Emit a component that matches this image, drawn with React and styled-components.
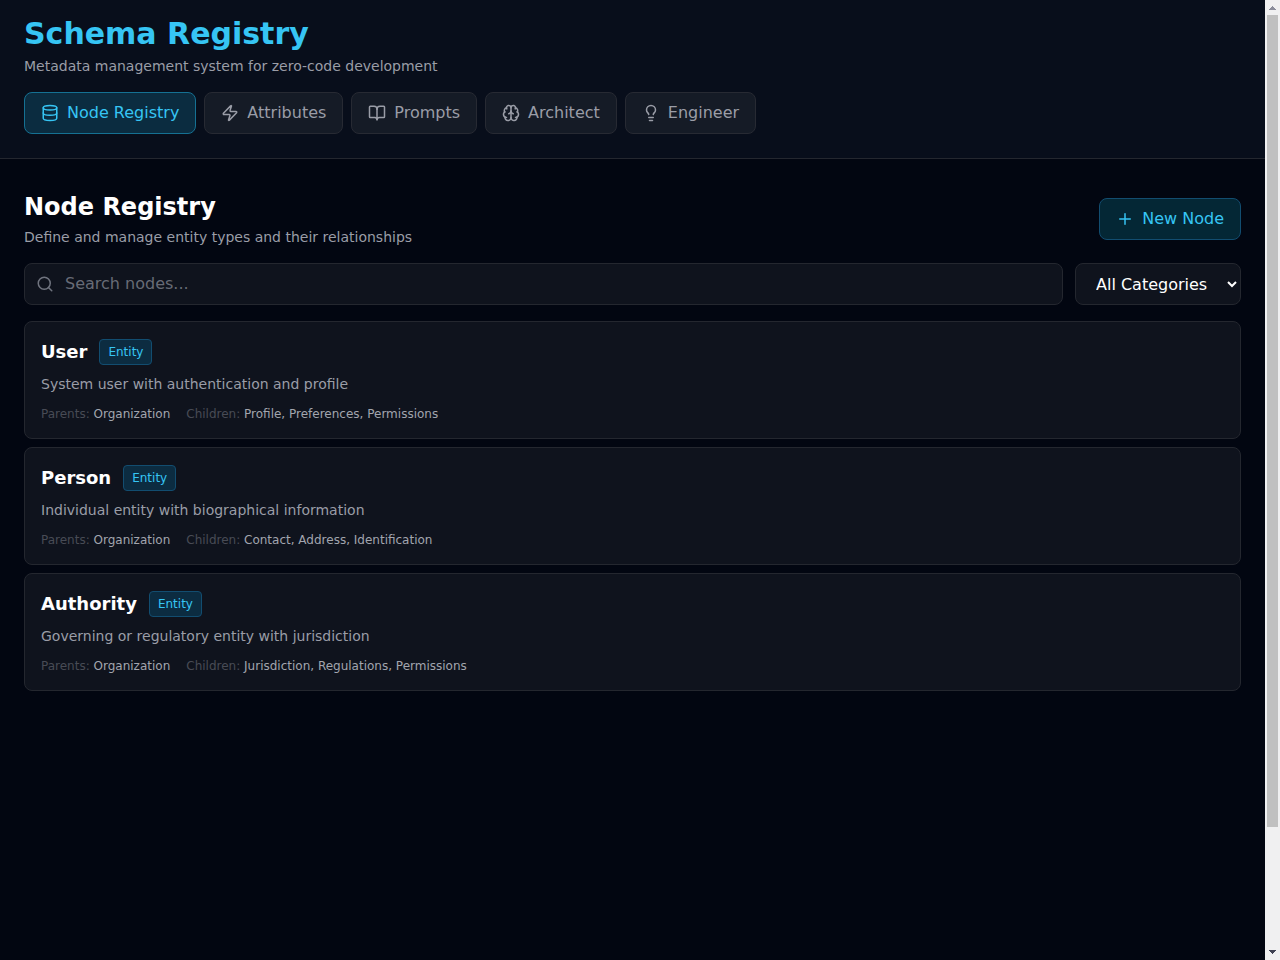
import { useState } from "react";
import styled, { createGlobalStyle } from "styled-components";
import {
  BookOpen,
  Brain,
  Database,
  Lightbulb,
  Plus,
  Search,
  Zap,
} from "lucide-react";

const tabs = [
  { label: "Node Registry", icon: Database },
  { label: "Attributes", icon: Zap },
  { label: "Prompts", icon: BookOpen },
  { label: "Architect", icon: Brain },
  { label: "Engineer", icon: Lightbulb },
];

const nodes = [
  {
    name: "User",
    category: "Entity",
    description: "System user with authentication and profile",
    parents: "Organization",
    children: "Profile, Preferences, Permissions",
  },
  {
    name: "Person",
    category: "Entity",
    description: "Individual entity with biographical information",
    parents: "Organization",
    children: "Contact, Address, Identification",
  },
  {
    name: "Authority",
    category: "Entity",
    description: "Governing or regulatory entity with jurisdiction",
    parents: "Organization",
    children: "Jurisdiction, Regulations, Permissions",
  },
];

export default function App() {
  const [active, setActive] = useState("Node Registry");
  const [query, setQuery] = useState("");

  const visible = nodes.filter((node) =>
    node.name.toLowerCase().includes(query.toLowerCase())
  );

  return (
    <Screen>
      <GlobalStyle />
      <Page>
        <Header>
          <Brand>Schema Registry</Brand>
          <Subtitle>Metadata management system for zero-code development</Subtitle>
          <Tabs>
            {tabs.map(({ label, icon: Icon }) => (
              <Tab
                key={label}
                $active={label === active}
                onClick={() => setActive(label)}
              >
                <Icon size={18} />
                {label}
              </Tab>
            ))}
          </Tabs>
        </Header>
        <Main>
          <TitleRow>
            <div>
              <Title>Node Registry</Title>
              <Subtitle>Define and manage entity types and their relationships</Subtitle>
            </div>
            <NewButton>
              <Plus size={18} />
              New Node
            </NewButton>
          </TitleRow>
          <Filters>
            <SearchBox>
              <Search size={18} />
              <SearchInput
                placeholder="Search nodes..."
                value={query}
                onChange={(e) => setQuery(e.target.value)}
              />
            </SearchBox>
            <CategorySelect>
              <option>All Categories</option>
              <option>Entity</option>
            </CategorySelect>
          </Filters>
          <NodeList>
            {visible.map((node) => (
              <Card key={node.name}>
                <CardHead>
                  <NodeName>{node.name}</NodeName>
                  <Badge>{node.category}</Badge>
                </CardHead>
                <Description>{node.description}</Description>
                <Meta>
                  <span>
                    Parents: <MetaValue>{node.parents}</MetaValue>
                  </span>
                  <span>
                    Children: <MetaValue>{node.children}</MetaValue>
                  </span>
                </Meta>
              </Card>
            ))}
          </NodeList>
        </Main>
      </Page>
      <Scrollbar>
        <Arrow viewBox="0 0 15 14" fill="#8b8d9b">
          <path d="M4 10h7v-1h-1v-1h-1v-1h-1v-1h-1v1h-1v1h-1v1h-1z" />
        </Arrow>
        <Thumb />
        <Arrow viewBox="0 0 15 14" fill="#3f4152">
          <path d="M4 4h7v1h-1v1h-1v1h-1v1h-1v-1h-1v-1h-1v-1h-1z" />
        </Arrow>
      </Scrollbar>
    </Screen>
  );
}

const GlobalStyle = createGlobalStyle`
  * {
    box-sizing: border-box;
    margin: 0;
  }
  body {
    background: #020611;
    font-family: "DejaVu Sans", sans-serif;
    font-size: 16px;
    line-height: 24px;
    overflow: hidden;
  }
  button, input, select {
    font: inherit;
  }
`;

const Screen = styled.div`
  display: flex;
  height: 100vh;
  overflow: hidden;
`;

const Page = styled.div`
  flex: 1;
  min-width: 0;
  background: #020611;
  color: #ffffff;
`;

const Header = styled.header`
  padding: 16px 24px 24px;
  background: #080e1b;
  border-bottom: 1px solid #24272f;
`;

const Brand = styled.h1`
  font-size: 30px;
  line-height: 36px;
  font-weight: 700;
  color: #36c5f4;
`;

const Subtitle = styled.p`
  margin-top: 4px;
  font-size: 14px;
  line-height: 20px;
  color: #9a9da7;
`;

const Tabs = styled.nav`
  display: flex;
  gap: 8px;
  margin-top: 16px;
`;

const Tab = styled.button`
  display: flex;
  align-items: center;
  gap: 8px;
  padding: 8px 16px;
  border-radius: 8px;
  border: 1px solid ${({ $active }) => ($active ? "#157193" : "#272a33")};
  background: ${({ $active }) => ($active ? "#0b2c40" : "#151b26")};
  color: ${({ $active }) => ($active ? "#36c5f4" : "#9a9da7")};
  cursor: pointer;
`;

const Main = styled.main`
  padding: 32px 24px;
`;

const TitleRow = styled.div`
  display: flex;
  align-items: center;
  justify-content: space-between;
`;

const Title = styled.h2`
  font-size: 24px;
  line-height: 32px;
  font-weight: 700;
`;

const NewButton = styled.button`
  display: flex;
  align-items: center;
  gap: 8px;
  padding: 8px 16px;
  border: 1px solid #124d70;
  border-radius: 8px;
  background: #042735;
  color: #36c5f4;
  cursor: pointer;
`;

const Filters = styled.div`
  display: flex;
  gap: 12px;
  margin-top: 16px;
`;

const SearchBox = styled.label`
  display: flex;
  flex: 1;
  align-items: center;
  gap: 11px;
  height: 42px;
  padding: 0 16px 0 11px;
  border: 1px solid #24272f;
  border-radius: 8px;
  background: #0f131d;
  color: #70747f;
`;

const SearchInput = styled.input`
  flex: 1;
  padding: 0;
  border: 0;
  outline: 0;
  background: transparent;
  color: #ffffff;
  &::placeholder {
    color: #676b76;
  }
`;

const CategorySelect = styled.select`
  height: 42px;
  padding: 8px 16px;
  width: 166px;
  border: 1px solid #24272f;
  border-radius: 8px;
  background: #0f131d;
  color: #ffffff;
`;

const NodeList = styled.div`
  display: flex;
  flex-direction: column;
  gap: 8px;
  margin-top: 16px;
`;

const Card = styled.article`
  padding: 16px;
  border: 1px solid #24272f;
  border-radius: 8px;
  background: #0f131d;
`;

const CardHead = styled.div`
  display: flex;
  align-items: center;
  gap: 12px;
`;

const NodeName = styled.h3`
  font-size: 18px;
  line-height: 28px;
  font-weight: 600;
`;

const Badge = styled.span`
  padding: 4px 8px;
  border: 1px solid #124d70;
  border-radius: 4px;
  background: #0c2c41;
  color: #36c5f4;
  font-size: 12px;
  line-height: 16px;
`;

const Description = styled.p`
  margin-top: 8px;
  font-size: 14px;
  line-height: 20px;
  color: #9a9da7;
`;

const Meta = styled.div`
  display: flex;
  gap: 16px;
  margin-top: 12px;
  font-size: 12px;
  line-height: 16px;
  color: #484b55;
`;

const MetaValue = styled.span`
  color: #a2a5ae;
`;

const Scrollbar = styled.div`
  display: flex;
  flex-direction: column;
  justify-content: space-between;
  width: 15px;
  background: #f0f0f1;
`;

const Arrow = styled.svg`
  width: 15px;
  height: 14px;
  shape-rendering: crispEdges;
`;

const Thumb = styled.div`
  width: 11px;
  height: 812px;
  margin: 1px 2px auto;
  background: #c0c0c0;
`;
